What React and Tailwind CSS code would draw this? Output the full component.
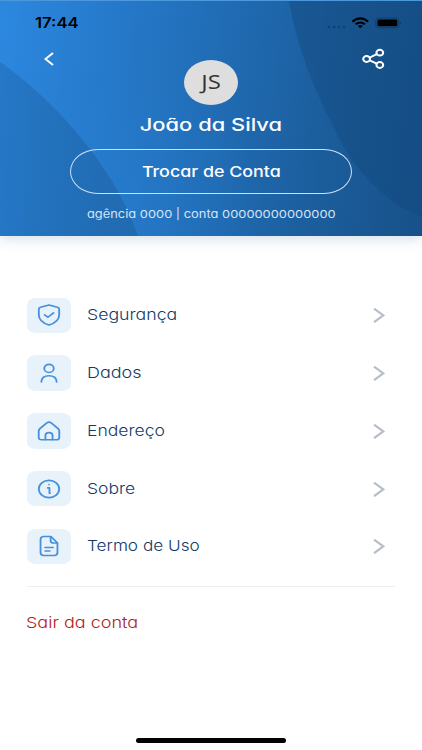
import React from 'react';

const HouseIcon = () => (
  <>
    <path d="M3.6 9.4 L10 3.2 Q12 1.4 14 3.2 L20.4 9.4 Q21.5 10.6 21.5 12 V19 Q21.5 21.6 18.8 21.6 H5.2 Q2.5 21.6 2.5 19 V12 Q2.5 10.6 3.6 9.4 Z" />
    <path d="M8.7 21.4 V17 Q8.7 13.8 12 13.8 Q15.3 13.8 15.3 17 V21.4" />
  </>
);

const items = [
  {
    label: 'Segurança',
    stretch: 'scale-x-[1.18]',
    icon: (
      <>
        <path d="M12 1 L19.8 3.5 Q21.4 4.1 21.4 5.8 V12 Q21.4 19.4 12 23 Q2.6 19.4 2.6 12 V5.8 Q2.6 4.1 4.2 3.5 Z" />
        <path d="m8 11.8 3 2.7 5.2-4.8" />
      </>
    ),
  },
  {
    label: 'Dados',
    stretch: 'scale-x-[1.2]',
    icon: (
      <>
        <circle cx="12" cy="7" r="4.4" />
        <path d="M5 21.9 V21 Q5.5 15 12 15 Q18.5 15 19 21 V21.9" />
      </>
    ),
  },
  { label: 'Endereço', stretch: 'scale-x-[1.17]', icon: <HouseIcon /> },
  {
    label: 'Sobre',
    stretch: 'scale-x-[1.17]',
    icon: (
      <>
        <circle cx="12" cy="12" r="9.4" />
        <path d="M10.8 10.8 H12.4 V16.6 M12.4 16.6 H13" />
        <path d="M12 7 v.2" />
      </>
    ),
  },
  {
    label: 'Termo de Uso',
    stretch: 'scale-x-[1.145]',
    icon: (
      <>
        <path d="M13 1.6 H7 Q4.2 1.6 4.2 4.8 V19.2 Q4.2 22.4 7 22.4 H17 Q19.8 22.4 19.8 19.2 V8.8 L13.8 1.6 Z" />
        <path d="M13.5 2 V6 Q13.5 8.8 16 8.8 H19.6 M8.4 13.6 H15.8 M8.4 17.4 H12.8" />
      </>
    ),
  },
];

const Chevron = () => (
  <svg className="mr-[10px] h-4 w-3 text-[#b8bec8]" viewBox="0 0 12 16" fill="none" stroke="currentColor" strokeWidth="2.2">
    <path d="M1 1.6 L10.3 8.4 L1 15.2" />
  </svg>
);

const StatusBar = () => (
  <div className="flex h-[44px] items-center justify-between pl-[35px] pr-[20px] text-black">
    <span className="inline-block origin-left scale-x-[1.19] text-[14px] font-semibold leading-none">17:44</span>
    <svg className="h-[12px] w-[75px]" viewBox="0 0 75 12">
      <g fill="#134372">
        <circle cx="2" cy="10" r="1.5" />
        <circle cx="7" cy="10" r="1.5" />
        <circle cx="12" cy="10" r="1.5" />
        <circle cx="17" cy="10" r="1.5" />
      </g>
      <g fill="none" stroke="currentColor" strokeWidth="2">
        <path d="M25.4 4.6 Q33.3 -1.8 41.2 4.6" />
        <path d="M28.6 7.3 Q33.3 3.7 38 7.3" />
      </g>
      <path d="M30.8 9 Q33.3 7.2 35.8 9 L33.3 11.2 Z" />
      <rect x="48.9" y="1" width="23" height="9.8" rx="2.6" fill="none" stroke="#103c68" strokeWidth="1" />
      <rect x="50.5" y="2.5" width="19.8" height="6.8" rx="1.4" />
      <path d="M73.2 4.3 Q75.6 5.9 73.2 7.5 Z" fill="#103c68" />
    </svg>
  </div>
);

const Header = () => (
  <header className="relative h-[236px] border-t border-[#4c98dc] bg-[linear-gradient(97deg,#2c88df_0%,#267acb_25%,#206bb3_52%,#1b5c9a_78%,#175189_100%)] shadow-[0_3px_12px_rgba(30,80,130,0.18)]">
    {/* Background curves */}
    <svg className="absolute inset-0 h-[235px] w-full" viewBox="0 0 422 236" preserveAspectRatio="none">
      <defs>
        <linearGradient id="leftCurve" x1="0" y1="0" x2="1" y2="0">
          <stop offset="0" stopColor="#1d65aa" stopOpacity="0.42" />
          <stop offset="1" stopColor="#1f66a8" stopOpacity="0.75" />
        </linearGradient>
        <radialGradient id="glow" gradientUnits="userSpaceOnUse" cx="130" cy="200" r="130">
          <stop offset="0" stopColor="#2a83d8" stopOpacity="0.3" />
          <stop offset="1" stopColor="#2a83d8" stopOpacity="0" />
        </radialGradient>
      </defs>
      <rect width="422" height="236" fill="url(#glow)" />
      <path d="M0 61 C48 95 112 160 138 236 H0 Z" fill="url(#leftCurve)" />
      <path d="M289 0 C298 50 315 90 333 125 C350 165 385 205 422 216 V0 Z" fill="#12487c" fillOpacity="0.42" />
    </svg>

    <div className="relative flex flex-col">
      <StatusBar />
      <div className="flex h-[61px] items-start justify-between pl-[44px] pr-[37px]">
        <svg className="mt-[7px] h-[14px] w-[10px]" viewBox="0 0 10 14" fill="none" stroke="white" strokeWidth="2">
          <path d="M9 1 L1.5 7 L9 13" />
        </svg>
        <div className="ml-[5px] mt-[15px] flex h-[45px] w-[54px] items-center justify-center rounded-[50%] bg-[#dedede]">
          <span className="inline-block -translate-y-px translate-x-px scale-x-[1.2] font-['Open_Sans',sans-serif] text-[20px] leading-none text-[#333333]">JS</span>
        </div>
        <svg className="mt-[3px] h-[22px] w-[23px]" viewBox="0 0 23 22" fill="none" stroke="white" strokeWidth="2">
          <ellipse cx="4.6" cy="11" rx="3.4" ry="3" />
          <ellipse cx="17.8" cy="4.7" rx="3.4" ry="2.9" />
          <ellipse cx="17.8" cy="17" rx="3.4" ry="2.9" />
          <path d="M7.6 9.6 L14.8 6.2 M7.6 12.4 L14.8 15.6" />
        </svg>
      </div>
      <div className="flex flex-col items-center">
        <h1 className="mt-[8px] h-[24px] scale-x-[1.25] text-[17.5px] font-medium leading-[22px] text-white">João da Silva</h1>
        <button className="mt-[11px] flex h-[45px] w-[282px] items-center justify-center rounded-[28px/22.5px] border-[1.5px] border-[#cfe2f4] text-white">
          <span className="inline-block scale-x-[1.19] text-[15px] font-medium leading-none">Trocar de Conta</span>
        </button>
        <p className="mt-[10px] scale-x-[1.17] whitespace-nowrap text-[11px] leading-[20px] text-[#d3e5f7]">agência 0000 | conta 00000000000000</p>
      </div>
    </div>
  </header>
);

const App = () => {
  return (
    <div className="flex h-[750px] w-[422px] flex-col overflow-hidden bg-white font-['Inter',sans-serif] [font-feature-settings:'cv11']">
      <Header />
      <main className="flex flex-1 flex-col px-[27px] pt-[61.5px]">
        <nav className="flex flex-col gap-[22.3px]">
          {items.map((item) => (
            <a key={item.label} className="flex h-[35.5px] items-center">
              <span className="flex h-full w-[44px] shrink-0 items-center justify-center rounded-[9px/7px] bg-[#e8f2fb]">
                <svg
                  className="mr-px h-[22px] w-[26px] text-[#4791dc]"
                  viewBox="0 0 24 24"
                  preserveAspectRatio="none"
                  fill="none"
                  stroke="currentColor"
                  strokeWidth="1.7"
                  strokeLinecap="round"
                  strokeLinejoin="round"
                >
                  {item.icon}
                </svg>
              </span>
              <span className="mb-[2px] ml-4 flex-1">
                <span className={`inline-block origin-left whitespace-nowrap text-[15px] font-light leading-none text-[#123a68] ${item.stretch}`}>{item.label}</span>
              </span>
              <Chevron />
            </a>
          ))}
        </nav>
        <hr className="mt-[22px] w-[368px] border-[#eceef0]" />
        <a className="-ml-px mt-[27px] origin-left scale-x-[1.2] self-start whitespace-nowrap text-[15px] font-light leading-[18px] text-[#b01c22]">Sair da conta</a>
      </main>
      <div className="mb-[7.5px] h-[4.5px] w-[150px] self-center rounded-full bg-black" />
    </div>
  );
};

export default App;
